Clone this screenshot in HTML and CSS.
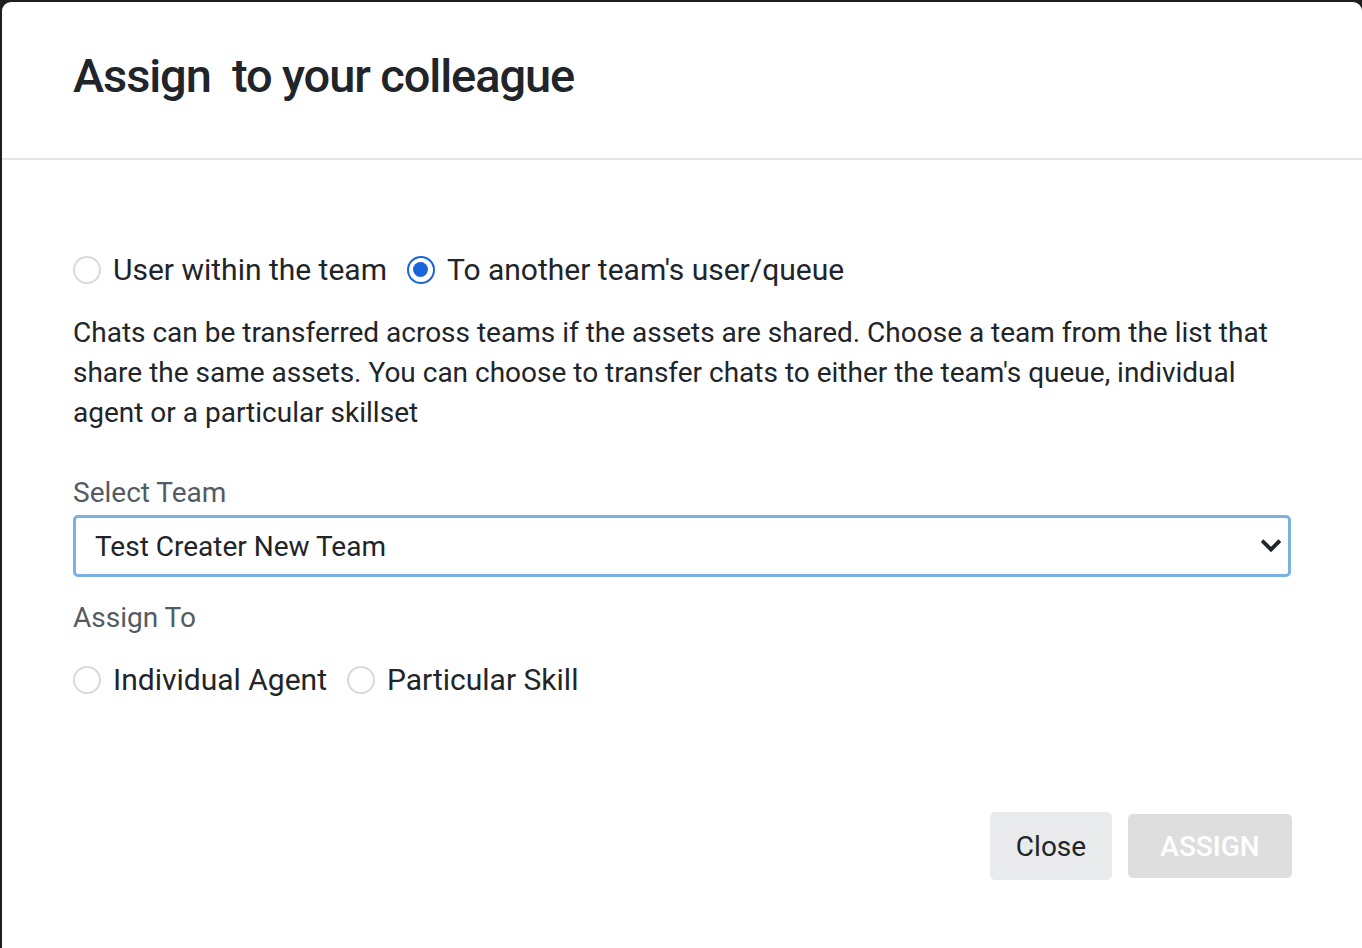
FILE: index.html
```html
<!DOCTYPE html>
<html>
<head>
<meta charset="utf-8">
<link rel="stylesheet" href="styles.css">
</head>
<body>
<div class="modal">
  <div class="modal-header">
    <h2 class="title">Assign&nbsp; to your colleague</h2>
  </div>
  <div class="modal-body">
    <div class="radio-row first">
      <label class="radio"><span class="dot"></span><span>User within the team</span></label>
      <label class="radio"><span class="dot checked"></span><span>To another team's user/queue</span></label>
    </div>
    <p class="desc">Chats can be transferred across teams if the assets are shared. Choose a team from the list that share the same assets. You can choose to transfer chats to either the team's queue, individual agent or a particular skillset</p>
    <div class="label select-label">Select Team</div>
    <div class="select">
      <span>Test Creater New Team</span>
      <svg class="chev" width="20" height="14" viewBox="0 0 20 14"><polyline points="2.5,3 10,10.5 17.5,3" fill="none" stroke="#212529" stroke-width="3.8" stroke-linecap="square"/></svg>
    </div>
    <div class="label assign-label">Assign To</div>
    <div class="radio-row second">
      <label class="radio"><span class="dot"></span><span>Individual Agent</span></label>
      <label class="radio"><span class="dot"></span><span>Particular Skill</span></label>
    </div>
  </div>
  <div class="modal-footer">
    <button class="btn btn-close">Close</button>
    <button class="btn btn-assign">ASSIGN</button>
  </div>
</div>
</body>
</html>
```
FILE: styles.css
```css
html, body {
  margin: 0;
  padding: 0;
  background: #1f1f1f;
  height: 100%;
  overflow: hidden;
}
body {
  font-family: Roboto, "Liberation Sans", sans-serif;
  color: #212529;
  padding: 2px 0 0 2px;
  box-sizing: border-box;
}
.modal {
  background: #fff;
  width: 1360px;
  height: 946px;
  border-radius: 9px 9px 0 0;
  display: flex;
  flex-direction: column;
}
.modal-header {
  height: 156px;
  border-bottom: 2px solid #e5e5e5;
  padding: 0 71px;
  display: flex;
  align-items: center;
}
.title {
  margin: 0;
  font-size: 47px;
  font-weight: 500;
  line-height: 1.2;
  padding-bottom: 8px;
  letter-spacing: -1.1px;
}
.modal-body {
  padding: 0 71px;
  font-size: 28px;
}
.radio-row {
  display: flex;
  gap: 20px;
  line-height: 40px;
  font-size: 30px;
}
.radio-row.first { margin-top: 90px; }
.radio-row.second { margin-top: 22px; }
.radio {
  display: flex;
  align-items: center;
  gap: 12px;
}
.dot {
  width: 28px;
  height: 28px;
  box-sizing: border-box;
  border-radius: 50%;
  border: 2px solid #dadada;
  background: #fff;
  position: relative;
}
.dot.checked {
  border: 2.5px solid #1a66d8;
}
.dot.checked::after {
  content: "";
  position: absolute;
  left: 4px;
  top: 4px;
  width: 15px;
  height: 15px;
  border-radius: 50%;
  background: #1a66d8;
}
.desc {
  margin: 23px 0 0;
  line-height: 40px;
}
.label {
  color: #545b63;
  line-height: 40px;
}
.select-label { margin-top: 40px; }
.assign-label { margin-top: 21px; }
.select {
  margin-top: 2px;
  height: 62px;
  box-sizing: border-box;
  border: 3px solid #7bb0e3;
  border-radius: 5px;
  display: flex;
  align-items: center;
  justify-content: space-between;
  padding: 0 7px 0 19px;
}
.modal-footer {
  margin-top: auto;
  height: 136px;
  display: flex;
  justify-content: flex-end;
  align-items: flex-start;
  gap: 16px;
  padding-right: 70px;
}
.btn {
  font-family: Roboto, "Liberation Sans", sans-serif;
  font-size: 28px;
  border: none;
  border-radius: 5px;
  padding: 0;
}
.btn-close {
  width: 122px;
  height: 68px;
  background: #e9eaec;
  color: #212529;
}
.btn-assign {
  margin-top: 2px;
  width: 164px;
  height: 64px;
  background: #dedede;
  color: #fff;
  font-weight: 500;
}
```
